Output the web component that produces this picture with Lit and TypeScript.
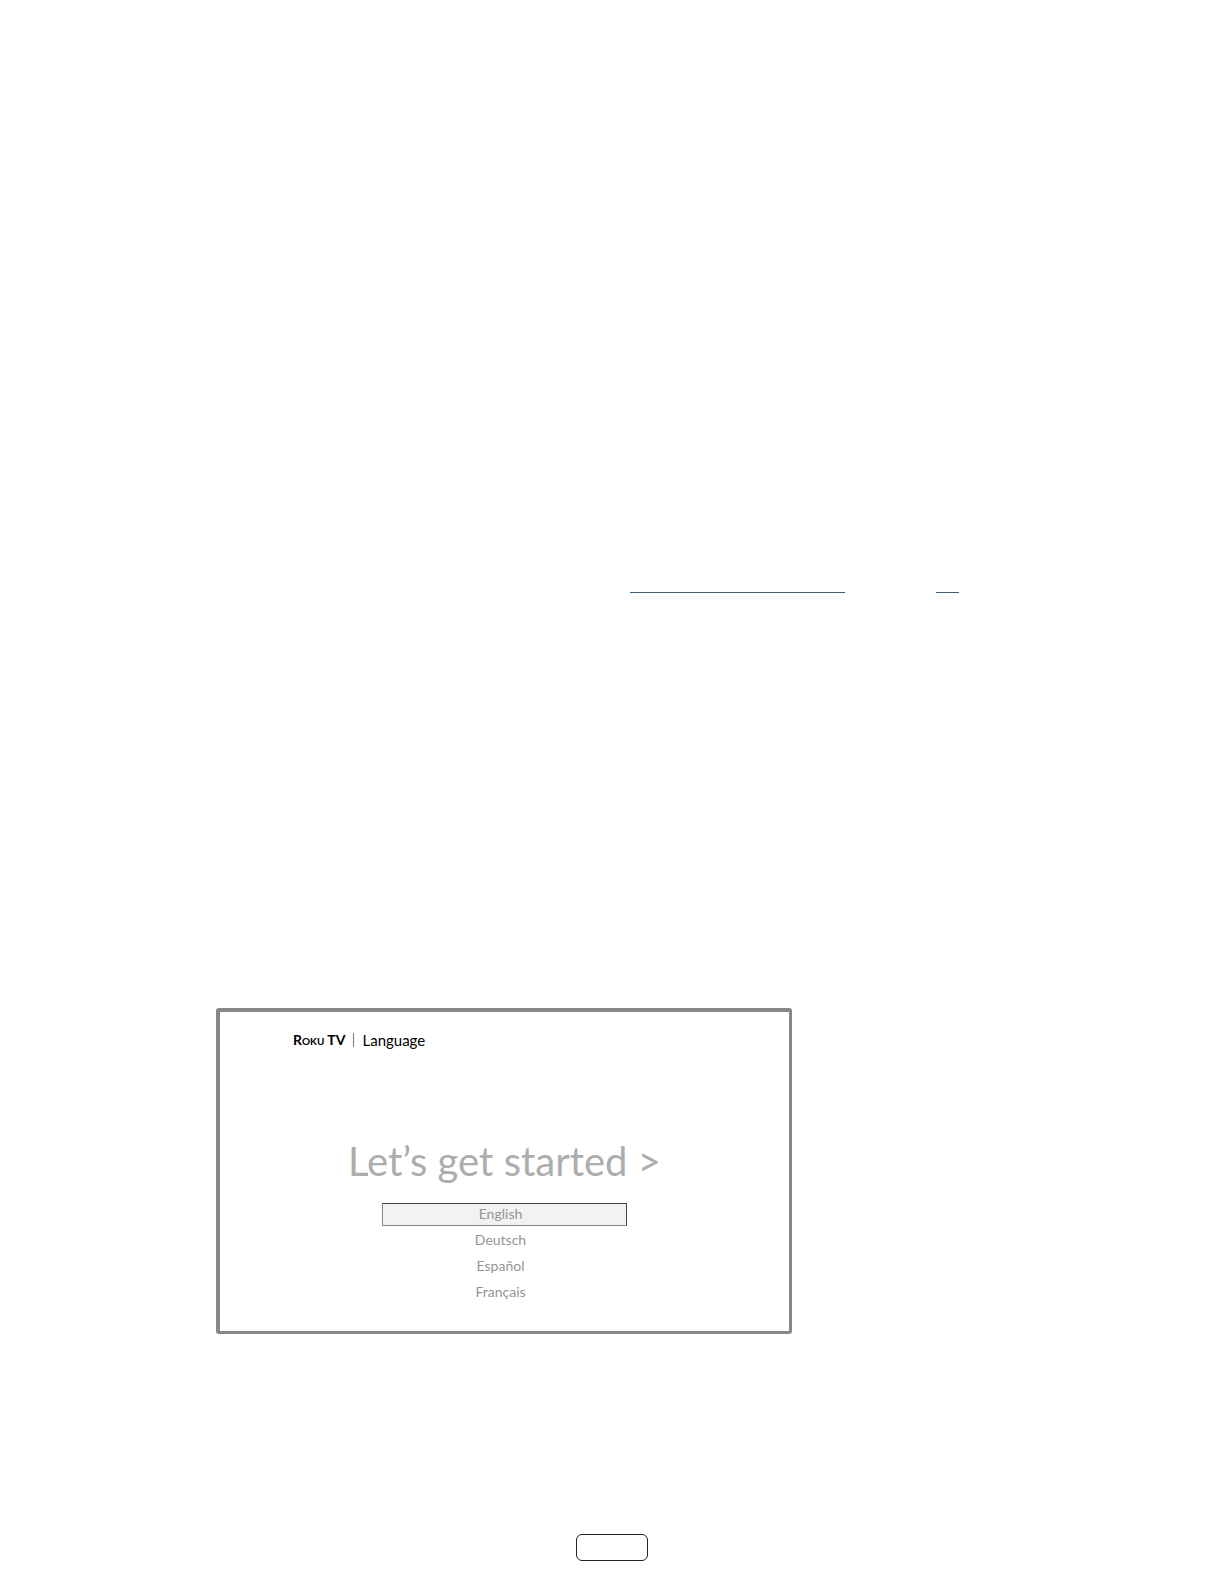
import { LitElement, html, css } from "lit";
import { customElement, state } from "lit/decorators.js";

@customElement("app-root")
export class AppRoot extends LitElement {
  @state() private selected = "English";

  private languages = ["English", "Deutsch", "Español", "Français"];

  static styles = css`
    :host {
      display: block;
      font-family: Lato, "Open Sans", sans-serif;
      background: #fff;
      color: #000;
    }
    .page {
      box-sizing: border-box;
      min-height: 100vh;
      display: flex;
      flex-direction: column;
      padding: 592px 216px 23px;
    }
    .rules {
      display: flex;
      justify-content: flex-end;
      gap: 91px;
      padding-right: 49px;
      margin-bottom: 415px;
    }
    .rule {
      height: 1px;
      background: #3a5f82;
    }
    .long {
      width: 215px;
    }
    .short {
      width: 23px;
    }
    .screen {
      box-sizing: border-box;
      width: 100%;
      max-width: 576px;
      border: 4px solid #888;
      border-right-width: 3px;
      border-bottom-width: 3px;
      border-radius: 3px;
      padding: 18px 0 27px;
    }
    .bar {
      display: flex;
      align-items: center;
      gap: 8px;
      padding-left: 73px;
      font-size: 15px;
      line-height: 20px;
    }
    .brand {
      font-size: 14px;
      font-weight: 700;
      font-variant: small-caps;
    }
    .divider {
      width: 1px;
      height: 14px;
      background: #777;
    }
    h1 {
      margin: 85px 0 16px;
      font-size: 40px;
      line-height: 52px;
      font-weight: 400;
      text-align: center;
      color: #adadad;
    }
    .options {
      display: flex;
      flex-direction: column;
      gap: 3px;
      width: 245px;
      margin: 0 auto;
    }
    .option {
      box-sizing: border-box;
      height: 23px;
      padding: 0 8px 2px 0;
      border: 1px solid transparent;
      background: none;
      font: inherit;
      font-size: 14px;
      line-height: 19px;
      color: #959595;
      text-align: center;
    }
    .selected {
      background: #f2f2f2;
      border-color: #444 #444 #888 #888;
    }
    .footer {
      display: flex;
      justify-content: center;
      margin-top: auto;
    }
    .tab {
      box-sizing: border-box;
      width: 72px;
      height: 27px;
      border: 1px solid #222;
      border-radius: 6px;
    }
  `;

  render() {
    return html`
      <main class="page">
        <div class="rules">
          <div class="rule long"></div>
          <div class="rule short"></div>
        </div>
        <section class="screen">
          <header class="bar">
            <span class="brand">Roku TV</span>
            <span class="divider"></span>
            <span>Language</span>
          </header>
          <h1>Let’s get started &gt;</h1>
          <div class="options">
            ${this.languages.map(
              (language) => html`<button
                type="button"
                class="option ${language === this.selected ? "selected" : ""}"
                aria-pressed=${language === this.selected ? "true" : "false"}
                @click=${() => (this.selected = language)}
              >${language}</button>`
            )}
          </div>
        </section>
        <footer class="footer"><div class="tab"></div></footer>
      </main>
    `;
  }
}
